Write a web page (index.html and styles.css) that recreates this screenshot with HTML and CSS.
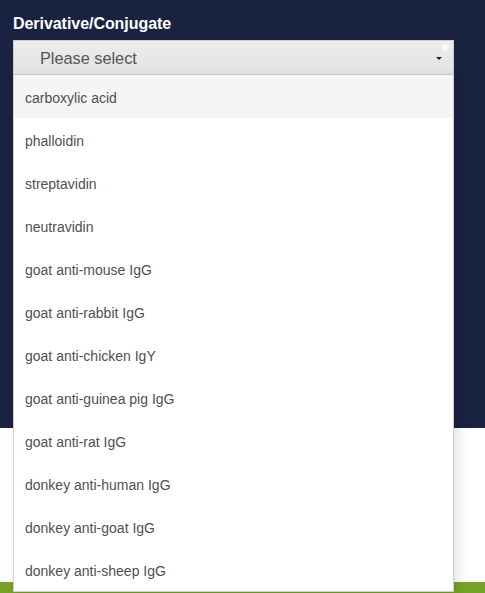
FILE: index.html
```html
<!DOCTYPE html>
<html>
<head>
<meta charset="utf-8">
<link rel="stylesheet" href="styles.css">
</head>
<body>
<div class="page">
  <section class="hero">
    <div class="field">
      <label class="label">Derivative/Conjugate</label>
      <div class="select">
        <div class="select-box">
          <span class="placeholder">Please select</span>
          <span class="caret"></span>
          <span class="glare"></span>
        </div>
        <ul class="menu">
          <li class="opt active">carboxylic acid</li>
          <li class="opt">phalloidin</li>
          <li class="opt">streptavidin</li>
          <li class="opt">neutravidin</li>
          <li class="opt">goat anti-mouse IgG</li>
          <li class="opt">goat anti-rabbit IgG</li>
          <li class="opt">goat anti-chicken IgY</li>
          <li class="opt">goat anti-guinea pig IgG</li>
          <li class="opt">goat anti-rat IgG</li>
          <li class="opt">donkey anti-human IgG</li>
          <li class="opt">donkey anti-goat IgG</li>
          <li class="opt">donkey anti-sheep IgG</li>
        </ul>
      </div>
    </div>
  </section>
  <section class="white"></section>
  <footer class="green"></footer>
</div>
</body>
</html>
```
FILE: styles.css
```css
html, body {
  margin: 0;
  padding: 0;
  background: #ffffff;
}
.page {
  display: flex;
  flex-direction: column;
  height: 593px;
  overflow: hidden;
  font-family: "Liberation Sans", Arial, sans-serif;
}
.hero {
  background: #1a2241;
  height: 428px;
  padding: 0 31px 0 13px;
  box-sizing: border-box;
}
.white {
  height: 154px;
  background: #fff;
}
.green {
  height: 11px;
  background: #76a22a;
}
.field {
  display: flex;
  flex-direction: column;
  padding-top: 15px;
}
.label {
  color: #fff;
  font-weight: bold;
  font-size: 16px;
  letter-spacing: -0.05px;
  line-height: 18px;
  height: 25px;
}
.select {
  position: relative;
  z-index: 2;
}
.select-box {
  position: relative;
  height: 35px;
  box-sizing: border-box;
  border: 1px solid #c9ccd2;
  background: linear-gradient(#ececec, #e3e3e3);
  display: flex;
  align-items: center;
  padding: 2px 0 0 26px;
}
.placeholder {
  color: #555;
  font-size: 16.3px;
}
.caret {
  position: absolute;
  right: 11px;
  top: 16px;
  width: 0;
  height: 0;
  border-left: 3px solid transparent;
  border-right: 3px solid transparent;
  border-top: 3px solid #222;
}
.glare {
  position: absolute;
  right: 3px;
  top: 1px;
  width: 10px;
  height: 10px;
  border-radius: 50%;
  background: radial-gradient(circle, #ffffff 0%, rgba(255,255,255,0.6) 40%, rgba(255,255,255,0) 70%);
}
.menu {
  position: absolute;
  left: 0;
  right: 0;
  top: 35px;
  margin: 0;
  padding: 0;
  list-style: none;
  background: #fff;
  border: 1px solid #cfcfcf;
  border-top: none;
  box-shadow: 4px 4px 12px rgba(0,0,0,0.12);
}
.opt {
  height: 43px;
  box-sizing: border-box;
  display: flex;
  align-items: center;
  padding: 2px 0 0 11px;
  font-size: 14px;
  color: #505050;
}
.opt.active {
  background: #f5f5f5;
}
```
